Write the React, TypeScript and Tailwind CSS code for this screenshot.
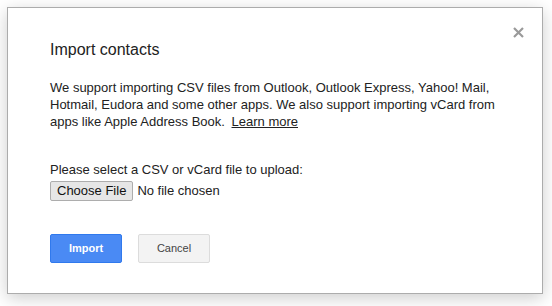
import React from 'react';

export default function App() {
    return (
        <div className="w-[552px] h-[306px] bg-white p-[7px] font-['Liberation_Sans',Arial,sans-serif] text-[#222]">
            <div className="relative w-[536px] h-[287px] bg-white border border-[#acacac] shadow-[0_4px_16px_rgba(0,0,0,0.2)] pl-[42px] pt-[32px]">
                <button className="absolute right-[18px] top-[18px] w-[12px] h-[12px] flex items-center justify-center">
                    <svg width="11" height="11" viewBox="0 0 11 11">
                        <path d="M1 1 L10 10 M10 1 L1 10" stroke="#9a9a9a" strokeWidth="2.2" />
                    </svg>
                </button>

                <h2 className="text-[16px] leading-[20px] font-normal">Import contacts</h2>

                <p className="mt-[19px] text-[13px] leading-[17px]">
                    We support importing CSV files from Outlook, Outlook Express, Yahoo! Mail,
                    <br />
                    Hotmail, Eudora and some other apps. We also support importing vCard from
                    <br />
                    apps like Apple Address Book.{' '}
                    <a className="ml-[3px] underline text-[#222]">Learn more</a>
                </p>

                <p className="mt-[31px] text-[13px] leading-[17px]">Please select a CSV or vCard file to upload:</p>
                <div className="mt-[3px] flex items-center text-[13px]">
                    <span className="h-[20px] px-[6px] flex items-center border border-[#adadad] rounded-[2px] bg-[#e6e6e6] text-[#111]">
                        Choose File
                    </span>
                    <span className="ml-[4px]">No file chosen</span>
                </div>

                <div className="mt-[33px] flex gap-[16px]">
                    <button className="w-[72px] h-[29px] rounded-[2px] border border-[#3079ed] bg-[#4a8af4] text-white text-[11px] font-bold">
                        Import
                    </button>
                    <button className="w-[72px] h-[29px] rounded-[2px] border border-[#dcdcdc] bg-[#f3f3f3] text-[#444] text-[11px]">
                        Cancel
                    </button>
                </div>
            </div>
        </div>
    );
}
